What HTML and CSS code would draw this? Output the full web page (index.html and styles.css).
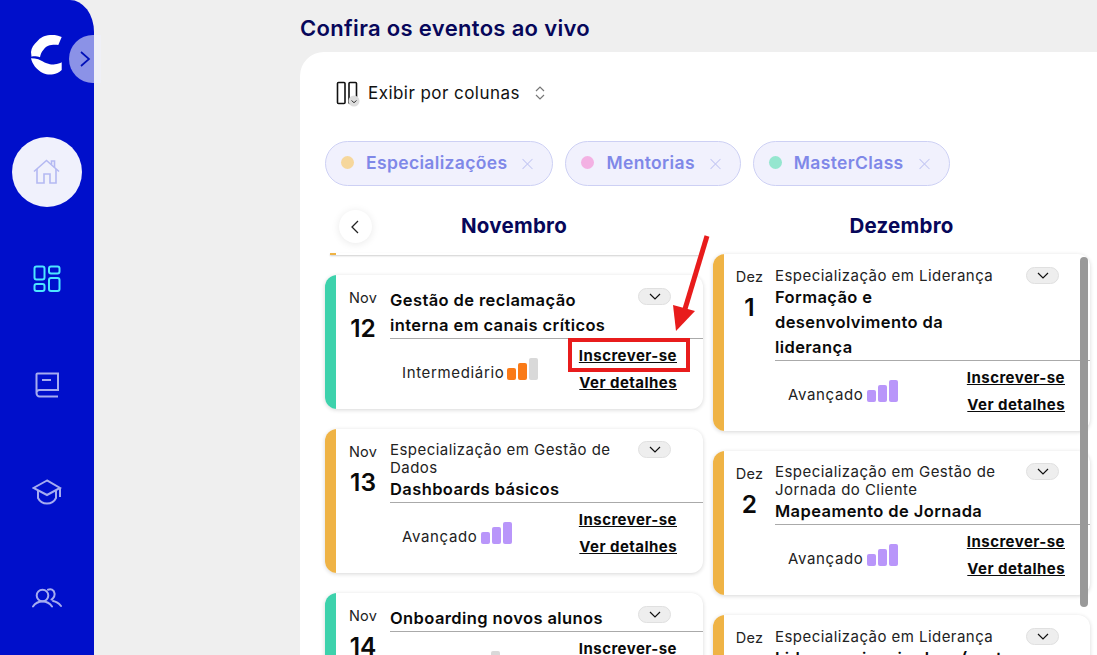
FILE: index.html
```html
<!DOCTYPE html>
<html lang="pt-BR">
<head>
<meta charset="utf-8">
<title>Eventos ao vivo</title>
<link rel="stylesheet" href="styles.css">
</head>
<body>
<div class="app">
  <aside class="sidebar">
    <div class="logo-row">
      <svg class="logo" viewBox="0 0 32 40" width="32" height="40"><path fill="#fff" d="M30.700 2 C26 0 22 -.5 19 0 C13 .5 9 3 6.500 6 C2.500 9.500 .5 13 0 17 L.5 21.700 C3 21 6.500 21.500 9 22.300 C9.500 19.500 10.500 17 12.300 15 C13.500 13 15 11.500 17.300 10.700 C20 9.800 24 9.500 27.300 10 Z"/><path fill="#fff" d="M0 23.300 C2.500 23.300 5 23.600 7.300 24.300 C10 25.300 13 27.500 15.700 28.300 C19 29.500 21.500 29.800 24 29.300 C26.500 29 29 28.300 30.700 27.300 V35 C28 37.500 25 39 22.300 39.300 C18.500 40 15 39.500 12.300 38.300 C9 36.500 6 34 4 31.700 C2 29 .5 26 0 23.300 Z"/></svg>
      <button class="toggle"><svg viewBox="0 0 12 18" width="12" height="18"><path d="M2 2l8 7-8 7" fill="none" stroke="#0010b8" stroke-width="1.700"/></svg></button>
    </div>
    <nav class="nav">
      <a class="nav-item active"><svg viewBox="0 0 28 26" width="28" height="26" fill="none" stroke="#b4b9f2" stroke-width="1.600"><path d="M1 12.500L13.500 1.500 26 12.500"/><path d="M4 10v14h7v-9h6v9h6V10"/><path d="M18.500 5.500V2h3v6.500"/></svg></a>
      <a class="nav-item"><svg viewBox="0 0 28 28" width="28" height="28" fill="none" stroke="#4de6ff" stroke-width="2"><rect x="1.500" y="1.500" width="10" height="13" rx="2"/><rect x="16" y="1.500" width="10.500" height="7" rx="2"/><rect x="1.500" y="19" width="10" height="7" rx="2"/><rect x="16" y="13" width="10.500" height="13" rx="2"/></svg></a>
      <a class="nav-item"><svg viewBox="0 0 24 26" width="24" height="26" fill="none" stroke="#a6acf0" stroke-width="2"><path d="M23 1.500H2.500a1 1 0 0 0-1 1V21a3 3 0 0 1 3-3H23z"/><path d="M1.500 21c0 2 1.500 3.500 3 3.500H23"/><path d="M7 8h9"/></svg></a>
      <a class="nav-item"><svg viewBox="0 0 30 26" width="30" height="26" fill="none" stroke="#a6acf0" stroke-width="2"><path d="M15 1.500L1.500 9 15 16 28 9z"/><path d="M6 11v8c2 4 5 5.500 9 5.500s7-1.500 9-5.500v-8"/><path d="M28 9v9"/></svg></a>
      <a class="nav-item"><svg viewBox="0 0 30 20" width="30" height="20" fill="none" stroke="#a6acf0" stroke-width="2" stroke-linecap="round"><circle cx="10.500" cy="7.500" r="5.800"/><path d="M1 18.500c2-3 5-5 9.500-5s7.500 2 9.500 5"/><path d="M16 1.700c1.500-.5 3-.5 4 0 3 1.500 3.500 6 1 8.500-.5.500-1 1-1.500 1.300"/><path d="M21 13c3 .5 6 2.500 8 5"/></svg></a>
    </nav>
  </aside>

  <main class="main">
    <h1 class="page-title">Confira os eventos ao vivo</h1>
    <section class="panel">
      <div class="view-row">
        <svg class="view-icon" viewBox="0 0 24 26" width="24" height="26" fill="none"><rect x="1.500" y="1.500" width="7.500" height="21" rx="1" stroke="#111" stroke-width="1.600"/><rect x="13" y="1.500" width="7.500" height="21" rx="1" stroke="#111" stroke-width="1.600"/><circle cx="18" cy="20" r="5.500" fill="#ddd"/><path d="M15.500 19.500l2.500 2.200 2.500-2.200" stroke="#333" stroke-width="1"/></svg>
        <span class="view-label">Exibir por colunas</span>
        <svg class="updown" viewBox="0 0 10 16" width="10" height="16" fill="none" stroke="#777" stroke-width="1.200"><path d="M1 6l4-4 4 4"/><path d="M1 10l4 4 4-4"/></svg>
      </div>

      <div class="chips">
        <div class="chip"><i class="dot dot-spec"></i><span>Especializações</span><b class="chip-x"></b></div>
        <div class="chip"><i class="dot dot-ment"></i><span>Mentorias</span><b class="chip-x"></b></div>
        <div class="chip"><i class="dot dot-master"></i><span>MasterClass</span><b class="chip-x"></b></div>
      </div>

      <div class="board">
        <div class="column">
          <div class="col-head">
            <button class="back"><svg viewBox="0 0 8 14" width="8" height="14" fill="none" stroke="#222" stroke-width="1.300"><path d="M7 1L1 7l6 6"/></svg></button>
            <h2>Novembro</h2>
          </div>
          <div class="list list-nov">
            <div class="stub"></div>

            <article class="card">
              <div class="bar bar-green"></div>
              <div class="date"><span>Nov</span><strong>12</strong></div>
              <div class="body">
                <div class="head">
                  <button class="more"><svg viewBox="0 0 12 7" width="12" height="7" fill="none" stroke="#111" stroke-width="1.200"><path d="M1 1l5 5 5-5"/></svg></button>
                  <h3>Gestão de reclamação interna em canais críticos</h3>
                </div>
                <div class="foot">
                  <div class="level"><span>Intermediário</span><div class="bars"><i class="b1 orange"></i><i class="b2 orange"></i><i class="b3 off"></i></div></div>
                  <div class="links"><a>Inscrever-se</a><a>Ver detalhes</a></div>
                </div>
              </div>
            </article>

            <article class="card">
              <div class="bar bar-yellow"></div>
              <div class="date"><span>Nov</span><strong>13</strong></div>
              <div class="body">
                <div class="head">
                  <button class="more"><svg viewBox="0 0 12 7" width="12" height="7" fill="none" stroke="#111" stroke-width="1.200"><path d="M1 1l5 5 5-5"/></svg></button>
                  <p class="sub">Especialização em Gestão de Dados</p>
                  <h3>Dashboards básicos</h3>
                </div>
                <div class="foot">
                  <div class="level"><span>Avançado</span><div class="bars"><i class="b1 purple"></i><i class="b2 purple"></i><i class="b3 purple"></i></div></div>
                  <div class="links"><a>Inscrever-se</a><a>Ver detalhes</a></div>
                </div>
              </div>
            </article>

            <article class="card">
              <div class="bar bar-green"></div>
              <div class="date"><span>Nov</span><strong>14</strong></div>
              <div class="body">
                <div class="head">
                  <button class="more"><svg viewBox="0 0 12 7" width="12" height="7" fill="none" stroke="#111" stroke-width="1.200"><path d="M1 1l5 5 5-5"/></svg></button>
                  <h3>Onboarding novos alunos</h3>
                </div>
                <div class="foot">
                  <div class="level"><div class="bars bars-shift"><i class="b1 off"></i><i class="b2 off"></i><i class="b3 off"></i></div></div>
                  <div class="links"><a>Inscrever-se</a></div>
                </div>
              </div>
            </article>
          </div>
        </div>

        <div class="column">
          <div class="col-head"><h2>Dezembro</h2></div>
          <div class="list list-dez">
            <article class="card">
              <div class="bar bar-yellow"></div>
              <div class="date"><span>Dez</span><strong>1</strong></div>
              <div class="body">
                <div class="head">
                  <button class="more"><svg viewBox="0 0 12 7" width="12" height="7" fill="none" stroke="#111" stroke-width="1.200"><path d="M1 1l5 5 5-5"/></svg></button>
                  <p class="sub">Especialização em Liderança</p>
                  <h3 class="narrow">Formação e desenvolvimento da liderança</h3>
                </div>
                <div class="foot">
                  <div class="level"><span>Avançado</span><div class="bars"><i class="b1 purple"></i><i class="b2 purple"></i><i class="b3 purple"></i></div></div>
                  <div class="links"><a>Inscrever-se</a><a>Ver detalhes</a></div>
                </div>
              </div>
            </article>

            <article class="card">
              <div class="bar bar-yellow"></div>
              <div class="date"><span>Dez</span><strong>2</strong></div>
              <div class="body">
                <div class="head">
                  <button class="more"><svg viewBox="0 0 12 7" width="12" height="7" fill="none" stroke="#111" stroke-width="1.200"><path d="M1 1l5 5 5-5"/></svg></button>
                  <p class="sub">Especialização em Gestão de Jornada do Cliente</p>
                  <h3>Mapeamento de Jornada</h3>
                </div>
                <div class="foot">
                  <div class="level"><span>Avançado</span><div class="bars"><i class="b1 purple"></i><i class="b2 purple"></i><i class="b3 purple"></i></div></div>
                  <div class="links"><a>Inscrever-se</a><a>Ver detalhes</a></div>
                </div>
              </div>
            </article>

            <article class="card">
              <div class="bar bar-yellow"></div>
              <div class="date"><span>Dez</span></div>
              <div class="body">
                <div class="head">
                  <button class="more"><svg viewBox="0 0 12 7" width="12" height="7" fill="none" stroke="#111" stroke-width="1.200"><path d="M1 1l5 5 5-5"/></svg></button>
                  <p class="sub">Especialização em Liderança</p>
                  <h3>Liderança inspiradora (parte</h3>
                </div>
                <div class="foot"></div>
              </div>
            </article>
            <div class="scrollbar"></div>
          </div>
        </div>
      </div>
    </section>
  </main>

  <div class="highlight-box"></div>
  <svg class="arrow" viewBox="0 0 60 110" width="60" height="110"><path d="M47 1L25 74" stroke="#e81c1c" stroke-width="5" fill="none"/><path d="M13 70L35 76 16 96z" fill="#e81c1c"/></svg>
</div>
</body>
</html>
```

FILE: styles.css
```css
* { box-sizing: border-box; }
html, body { margin: 0; height: 100%; overflow: hidden; }
body { background: #efefef; font-family: "Inter", "Liberation Sans", sans-serif; color: #111; }
button { border: 0; padding: 0; font: inherit; }
h1, h2, h3, p { margin: 0; }

.app { position: relative; display: flex; width: 1097px; height: 655px; overflow: hidden; }

.sidebar { flex: 0 0 94px; height: 100%; background: #000fcb; border-top-right-radius: 24px 32px; padding-top: 35px; }
.logo-row { position: relative; height: 48px; padding-left: 31px; }
.logo { display: block; }
.toggle { position: absolute; left: 69px; top: 0; width: 32px; height: 48px; border-radius: 24px 0 0 24px; background: rgba(240, 241, 252, .58); display: flex; align-items: center; justify-content: center; z-index: 2; }
.nav { display: flex; flex-direction: column; align-items: center; gap: 36.500px; margin-top: 54px; }
.nav-item { width: 70px; height: 70px; border-radius: 50%; display: flex; align-items: center; justify-content: center; }
.nav-item.active { background: #f0f1fc; }

.main { flex: 0 0 auto; width: 797px; margin-left: 206px; display: flex; flex-direction: column; }
.page-title { height: 52px; padding-top: 14px; font-size: 22px; line-height: 28px; font-weight: 600; color: #07075a; letter-spacing: .33px; white-space: nowrap; }
.panel { flex: 1; background: #fff; border-top-left-radius: 24px; padding: 0 0 0 25px; min-height: 0; overflow: hidden; }

.view-row { display: flex; align-items: center; height: 82px; padding-left: 11px; }
.view-icon { flex: none; margin-top: 2px; }
.view-label { margin-left: 8px; font-size: 17px; letter-spacing: .45px; color: #111; }
.updown { margin-left: 15px; }

.chips { display: flex; gap: 12px; margin-top: 7px; }
.chip { display: flex; align-items: center; height: 45px; padding: 0 19px 3px 15px; border: 1px solid #cdd0f4; border-radius: 23px; background: #f1f1fd; color: #7f88e8; font-size: 17.500px; letter-spacing: .35px; font-weight: 600; }
.dot { width: 13px; height: 13px; border-radius: 50%; margin-right: 12px; flex: none; }
.dot-spec { background: #f6d79c; }
.dot-ment { background: #f3b1e3; }
.dot-master { background: #95e6cf; }
.chip-x { position: relative; width: 11px; height: 11px; margin-left: 15px; margin-top: 3px; flex: none; }
.chip-x::before, .chip-x::after { content: ""; position: absolute; left: 5px; top: -1.500px; width: 1.200px; height: 14px; background: #c3c7f3; }
.chip-x::before { transform: rotate(45deg); }
.chip-x::after { transform: rotate(-45deg); }

.board { display: grid; grid-template-columns: 378px 377px; column-gap: 10px; margin-top: 21px; }
.column { position: relative; min-width: 0; }
.col-head { position: relative; height: 47px; display: flex; justify-content: center; }
.col-head h2 { font-size: 20.500px; line-height: 38px; font-weight: 700; color: #07075a; letter-spacing: .25px; }
.back { position: absolute; left: 14px; top: 3px; width: 33px; height: 33px; padding-right: 2px; border-radius: 50%; background: #fff; box-shadow: 0 1px 8px rgba(0, 0, 0, .09); display: flex; align-items: center; justify-content: center; z-index: 2; }

.list { position: relative; display: flex; flex-direction: column; gap: 20px; }
.list-nov { margin-top: -1px; }
.stub { flex: none; height: 2px; margin-left: 5px; background: linear-gradient(to right, #efb345 6px, #fff 6px); box-shadow: 0 1px 2px rgba(0, 0, 0, .2); }
.card { flex: none; display: flex; background: #fff; border-radius: 12px; box-shadow: 0 1px 4px rgba(0, 0, 0, .16); overflow: hidden; }
.bar { flex: 0 0 11px; }
.bar-green { background: #3dd2ac; }
.bar-yellow { background: #efb345; }
.date { flex: 0 0 54px; display: flex; flex-direction: column; align-items: center; padding-top: 13px; }
.list-dez .date { flex-basis: 51px; }
.date span { font-size: 14.500px; line-height: 20px; letter-spacing: .2px; color: #222; }
.date strong { font-size: 24.500px; line-height: 40px; font-weight: 600; color: #0a0a0a; }
.body { flex: 1; min-width: 0; }
.head { padding-top: 12.500px; border-bottom: 1px solid #aaa; }
.more { float: right; width: 33px; height: 17px; margin-right: 32px; border-radius: 9px; background: #eee; border: 1px solid #e0e0e0; display: flex; align-items: center; justify-content: center; }
.list-dez .more { margin-right: 31px; }
.sub { font-size: 15px; line-height: 18px; letter-spacing: .45px; color: #222; }
.head h3 { font-size: 16.500px; line-height: 25px; font-weight: 600; letter-spacing: .4px; color: #0a0a0a; }
.head h3.narrow { max-width: 225px; }
.foot { height: 70px; display: flex; justify-content: space-between; padding: 0 26px 0 12px; }
.list-dez .foot { padding-left: 13px; padding-right: 25px; }
.level { display: flex; align-items: flex-end; padding-bottom: 29px; font-size: 15px; letter-spacing: .65px; color: #222; }
.level span { line-height: 20px; margin-bottom: -3px; }
.bars { display: flex; align-items: flex-end; gap: 2px; margin-left: 3px; }
.bars-shift { margin-left: 67px; }
.bars i { display: block; width: 9px; border-radius: 2px; }
.b1 { height: 12px; }
.b2 { height: 17px; }
.b3 { height: 22px; }
.orange { background: #fa7a17; }
.purple { background: #b996fa; }
.off { background: #d9d9d9; }
.links { display: flex; flex-direction: column; align-items: flex-end; padding-top: 6px; gap: 5px; }
.links a { font-size: 15px; line-height: 22px; font-weight: 700; letter-spacing: .45px; text-decoration: underline; color: #0a0a0a; white-space: nowrap; }

.scrollbar { position: absolute; right: 2px; top: 3px; width: 8px; height: 350px; border-radius: 4px; background: #999; }

.highlight-box { position: absolute; left: 568px; top: 338px; width: 122px; height: 34px; border: 4px solid #e81c1c; }
.arrow { position: absolute; left: 660px; top: 235px; }
```
